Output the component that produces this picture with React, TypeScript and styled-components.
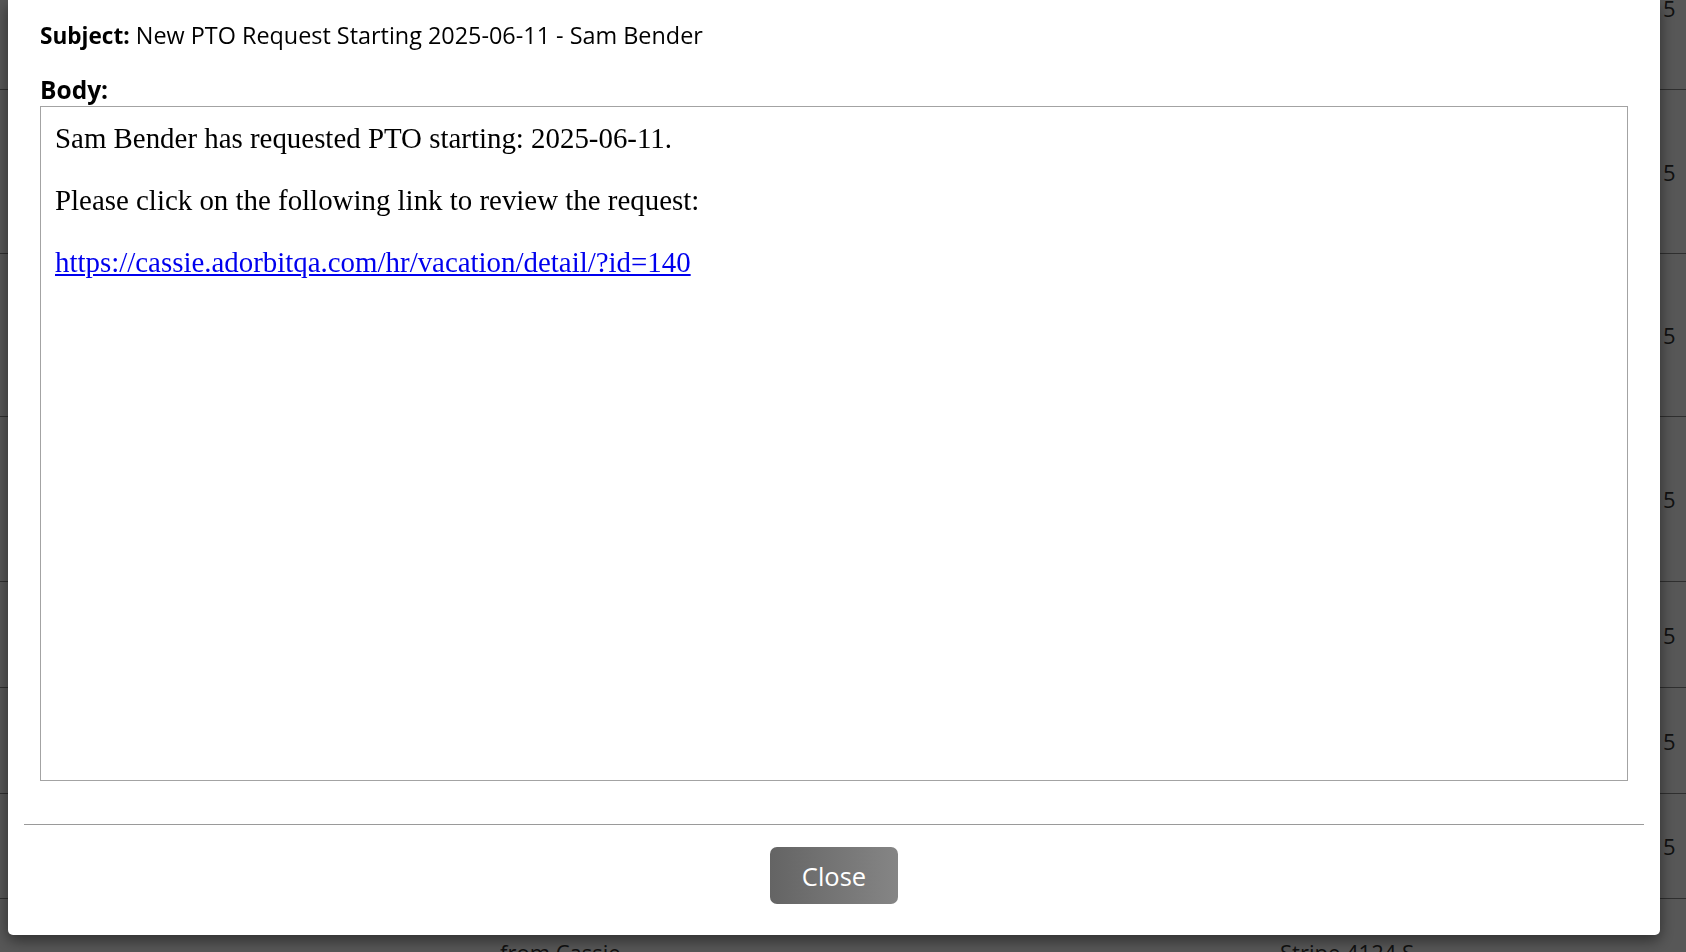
import React from "react";
import styled, { createGlobalStyle } from "styled-components";

const Global = createGlobalStyle`
  html, body { margin: 0; padding: 0; height: 100%; overflow: hidden; background: #fff; }
  #root { height: 100%; }
`;

const Page = styled.div`
  height: 952px;
  overflow: hidden;
  font-family: "Open Sans", "Liberation Sans", sans-serif;
  color: #333;
  background: #fff;
`;

const Table = styled.div`
  margin-top: -74px;
  display: flex;
  flex-direction: column;
`;

const Row = styled.div<{ $h: number }>`
  height: ${(p) => p.$h}px;
  border-bottom: 1px solid #8a8a8a;
  box-sizing: border-box;
  display: grid;
  grid-template-columns: 500px 780px 383px 1fr;
  align-items: center;
  font-size: 22px;
`;

const Cell = styled.div`
  white-space: nowrap;
  overflow: hidden;
`;

const Overlay = styled.div`
  position: fixed;
  inset: 0;
  background: rgba(0, 0, 0, 0.66);
  display: flex;
  padding: 0 26px 17px 8px;
  box-sizing: border-box;
`;

const Modal = styled.div`
  flex: 1;
  background: #fff;
  border-radius: 0 0 5px 5px;
  box-shadow: 0 5px 15px rgba(0, 0, 0, 0.5);
  display: flex;
  flex-direction: column;
  font-family: "Open Sans", "Liberation Sans", sans-serif;
  color: #000;
`;

const ModalBody = styled.div`
  padding: 20px 32px 0 32px;
  display: flex;
  flex-direction: column;
`;

const FieldLine = styled.div`
  font-size: 23.4px;
  line-height: 30px;
  white-space: nowrap;
`;

const Label = styled.b`
  font-weight: 700;
  font-size: 22.6px;
`;

const BodyLabel = styled.div`
  font-size: 24.5px;
  font-weight: 700;
  line-height: 32px;
  margin-top: 23px;
`;

const MailBox = styled.div`
  height: 675px;
  box-sizing: border-box;
  border: 1px solid #a3a3a3;
  padding: 0 14px;
  font-family: "Liberation Serif", "Times New Roman", serif;
  font-size: 28.9px;
  color: #000;
  overflow: hidden;
`;

const Para = styled.p`
  margin: 14px 0 28px;
  line-height: 34px;
`;

const Link = styled.a`
  color: #0000ee;
  text-decoration: underline;
`;

const Footer = styled.div`
  margin: 43px 16px 0;
  border-top: 1px solid #9a9a9a;
  padding-top: 22px;
  display: flex;
  justify-content: center;
`;

const CloseButton = styled.button`
  width: 128px;
  height: 57px;
  border: none;
  border-radius: 7px;
  background: linear-gradient(to right, #646464, #858585);
  color: #fff;
  font-family: "Open Sans", "Liberation Sans", sans-serif;
  font-size: 25.5px;
  cursor: pointer;
`;

const rows = [164, 164, 163, 165, 106, 106, 105, 106];

export default function App() {
  return (
    <>
      <Global />
      <Page>
        <Table>
          {rows.map((h, i) => (
            <Row key={i} $h={h}>
              <Cell />
              <Cell>{i === rows.length - 1 ? "from Cassie" : ""}</Cell>
              <Cell>{i === rows.length - 1 ? "Stripe 4124 S" : ""}</Cell>
              <Cell>{i === rows.length - 1 ? "" : "5"}</Cell>
            </Row>
          ))}
        </Table>
      </Page>
      <Overlay>
        <Modal>
          <ModalBody>
            <FieldLine>
              <Label>Subject:</Label> New PTO Request Starting 2025-06-11 - Sam Bender
            </FieldLine>
            <BodyLabel>Body:</BodyLabel>
            <MailBox>
              <Para>Sam Bender has requested PTO starting: 2025-06-11.</Para>
              <Para>Please click on the following link to review the request:</Para>
              <Para>
                <Link href="#">https://cassie.adorbitqa.com/hr/vacation/detail/?id=140</Link>
              </Para>
            </MailBox>
          </ModalBody>
          <Footer>
            <CloseButton>Close</CloseButton>
          </Footer>
        </Modal>
      </Overlay>
    </>
  );
}
